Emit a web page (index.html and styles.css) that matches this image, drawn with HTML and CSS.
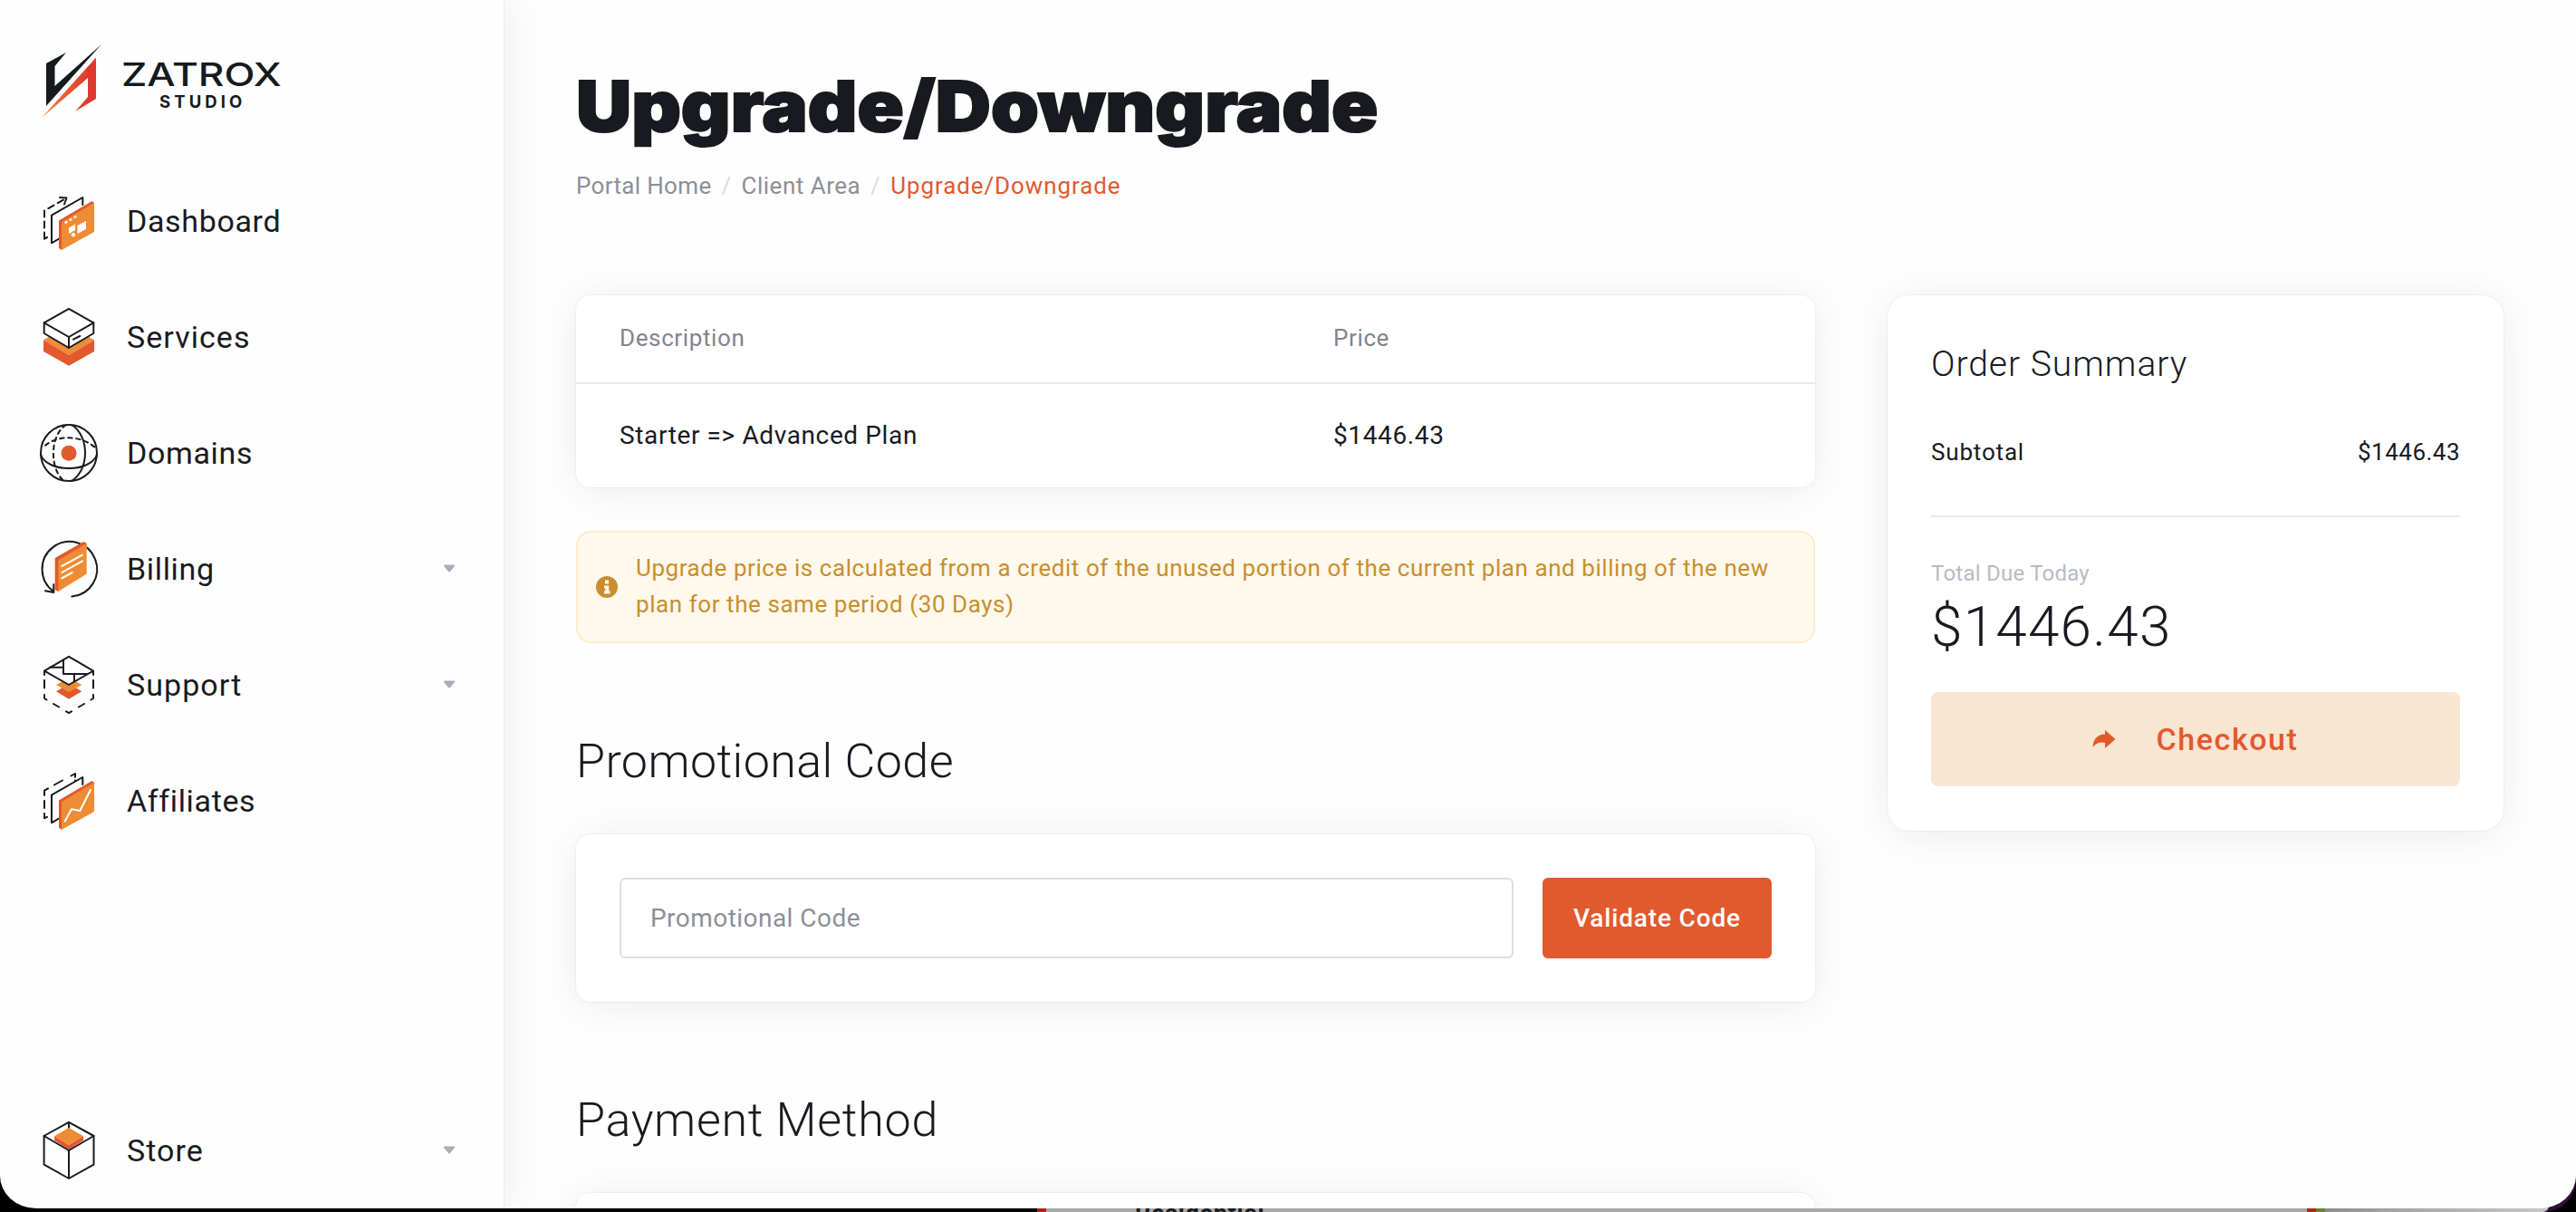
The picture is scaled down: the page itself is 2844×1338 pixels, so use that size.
FILE: index.html
```
<!DOCTYPE html>
<html lang="en">
<head>
<meta charset="utf-8">
<title>Upgrade/Downgrade</title>
<link rel="stylesheet" href="styles.css">
</head>
<body>
<div class="backdrop">
  <span class="chip chip-red"></span>
  <div class="pane"><span class="pane-title">Residential</span></div>
  <span class="chip chip-red"></span><span class="chip chip-green"></span>
  <div class="pane-end"></div>
</div>
<div class="window">
  <aside class="sidebar">
    <a class="logo">
      <svg class="logo-mark" width="66" height="82" viewBox="0 0 66 82">
        <defs><linearGradient id="flame" x1="0" y1="0" x2="1" y2="0"><stop offset="0.1" stop-color="#ec7c33"/><stop offset="0.85" stop-color="#dc3a31"/></linearGradient></defs>
        <path fill="#161a1d" d="M5 21 27 9 14.500 24V46L66 0 5 68z"/>
        <path fill="url(#flame)" d="M60 14.500V60L37 74 51 58V37L0 81z"/>
      </svg>
      <span class="logo-text"><b class="logo-name">ZATROX</b><b class="logo-sub">STUDIO</b></span>
    </a>
    <nav class="nav">
      <a class="nav-item">
        <svg class="icon" viewBox="0 0 64 64">
          <path class="line dash" d="M5 51.500V20.500L27 8"/><path class="line" d="M5 51.500l3-1.500M22 6l7.500.5L27 13.500"/>
          <path class="line" d="M22 51 13 56.300V25.700L47.300 6v8"/>
          <path class="dark" d="M21 31.500 57.500 10l2.500 2v5L24.500 64 21 62z"/>
          <path class="orange" d="M24 33 60 12v32L24 64z"/>
          <path class="white" d="M32 39.500l7-4V42l-7 4zM41.500 37 51 31.800v9L41.500 46.300z"/><circle class="white" cx="37" cy="47.300" r="2.200"/>
          <path class="dots" d="M28.500 33.600l1-.5M33.500 30.700l1-.5M38.500 27.700l1-.5"/>
        </svg><span>Dashboard</span></a>
      <a class="nav-item wide">
        <svg class="icon" viewBox="0 0 64 64">
          <path class="orange" d="M4 35.300 32 20l28 15.300L32 52z"/><path class="dark" d="M4 35.300 32 52l28-16.700V48L32 63.700 4 48z"/>
          <path class="line fillw" d="M32 .8 59.300 16.300V28L32 44 4.700 28V16.300z"/><path class="line" d="M4.700 16.300 32 32l27.300-15.700M32 32v12M37 34.700l7.300-3.700"/>
        </svg><span>Services</span></a>
      <a class="nav-item">
        <svg class="icon" viewBox="0 0 64 64">
          <circle class="line" cx="32" cy="32" r="31"/>
          <path class="line" d="M35 1C55 13 55 51 35 63M1 34C8 54 56 54 63 34"/>
          <path class="line dash2" d="M29 1C11 12 11 48 25 61.500M6 23.700C20 12 46 12 62 27"/>
          <circle class="dark" cx="32" cy="32.300" r="8.500"/>
        </svg><span>Domains</span></a>
      <a class="nav-item">
        <svg class="icon" viewBox="0 0 64 64">
          <path class="line" d="M15.300 57A30.300 30.300 0 1 1 35.300 62.500M6 56.300l9.300 1.700v-8.700"/>
          <path class="dark" d="M16.700 20 48.300 2l3.400 1.700v5L20.300 57l-3.600-2z"/><path class="orange" d="M20.300 22.500 51.700 4v33.500L20.300 57z"/>
          <path class="wline" d="M24.300 29 47 16.700M24.300 36 47 23.300M24.300 42.300l11.400-6.300"/>
        </svg><span>Billing</span><svg class="caret" viewBox="0 0 14 10"><path d="M2 1.500h10l-5 6z"/></svg></a>
      <a class="nav-item wide">
        <svg class="icon" viewBox="0 0 64 64">
          <path class="dark" d="M18 39.300 32 31l14.300 8.300L32 47.700z"/><path class="orange" d="M18 32l14-8 14.300 8L32 40z"/>
          <path class="line fillw" d="M32 .8 59 16.700 32 32 5 16.700z"/><path class="line" d="M26 4.700V20h26M11 12.700h15M38 20v8"/>
          <path class="line" d="M5 17v4M5 27v8.500M5 43v4l2.500 1.500M15 53l6 3.500M29 61.300l3 1.800 3-1.800M43 56.500l6-3.500M56.500 48.500 59 47v-4M59 35.500V27M59 21v-4"/>
        </svg><span>Support</span><svg class="caret" viewBox="0 0 14 10"><path d="M2 1.500h10l-5 6z"/></svg></a>
      <a class="nav-item">
        <svg class="icon" viewBox="0 0 64 64">
          <path class="line" d="M5 26v-5.300L9 18.500M16 14.500l9-5M34.500 4.500 39 2v4M5 32v8M5 46v5.300l3-1.500M39 9.500v.5"/>
          <path class="line" d="M22 51 13 56.300V25.700L47.300 6v8"/>
          <path class="dark" d="M21 31.500 57.500 10l2.500 2v5L24.500 64 21 62z"/><path class="orange" d="M24 33 60 12v32L24 64z"/>
          <path class="wline" d="M27.700 54.500 35 41.300l9.300 1.700L56 20"/>
        </svg><span>Affiliates</span></a>
      <a class="nav-item nav-last wide">
        <svg class="icon" viewBox="0 0 64 64">
          <path class="line" d="M32 .8 59.500 16v31.700L32 63 4.600 47.700V16zM32 32v31M32 1v7"/>
          <path class="dark" d="M16 16.300 32 26l16-9.700V21L32 31 16 21z"/><path class="orange" d="M32 7l16 9.300L32 26 16 16.300z"/>
          <path class="line" d="M4.600 16 32 32l27.500-16"/>
        </svg><span>Store</span><svg class="caret" viewBox="0 0 14 10"><path d="M2 1.500h10l-5 6z"/></svg></a>
    </nav>
  </aside>
  <main class="main">
    <h1><span class="title">Upgrade/Downgrade</span></h1>
    <div class="crumbs"><span class="crumb-home">Portal Home</span><i>/</i><span>Client Area</span><i>/</i><span class="current">Upgrade/Downgrade</span></div>
    <div class="columns">
      <div class="content">
        <section class="card">
          <div class="row head"><span>Description</span><span>Price</span></div>
          <div class="row"><span>Starter =&gt; Advanced Plan</span><span>$1446.43</span></div>
        </section>
        <div class="alert">
          <svg class="info" viewBox="0 0 24 24"><circle cx="12" cy="12" r="12" fill="#c98f2e"/><path fill="#fff8ec" d="M10 4.500h4v4h-4zM9 10.500h5.200v6H15.500V19.500H9v-3h1.300v-3H9z"/></svg>
          <p>Upgrade price is calculated from a credit of the unused portion of the current plan and billing of the new<br>plan for the same period (30 Days)</p>
        </div>
        <h2>Promotional Code</h2>
        <section class="card promo">
          <div class="input">Promotional Code</div>
          <div class="validate">Validate Code</div>
        </section>
        <h2 class="h2-pay">Payment Method</h2>
        <section class="card pay"></section>
      </div>
      <section class="card summary">
        <h3>Order Summary</h3>
        <div class="sub"><span class="sub-label">Subtotal</span><span>$1446.43</span></div>
        <div class="due">Total Due Today</div>
        <div class="amount">$1446.43</div>
        <div class="checkout"><svg class="share" viewBox="0 0 26 22"><path d="M14 1v4.500C6 6 1 10 .5 20.500 4 15 8 14.500 14 15v6L25.500 11z"/></svg><span>Checkout</span></div>
      </section>
    </div>
  </main>
</div>
</body>
</html>
```
FILE: styles.css
```
* { box-sizing: border-box; }
body {
  margin: 0;
  width: 2844px;
  height: 1338px;
  overflow: hidden;
  position: relative;
  background: #060608;
  color: #191a1f;
  font-family: Roboto, "Liberation Sans", sans-serif;
}
h1, h2, h3, p { margin: 0; font-weight: 300; }

/* desktop visible behind the window */
.backdrop {
  position: absolute;
  inset: auto 0 0 0;
  height: 72px;
  padding-left: 1145px;
  display: flex;
  background: #000;
}
.chip { width: 10px; height: 72px; }
.chip-red { background: #a62a1a; }
.chip-green { background: #6a852f; }
.pane { width: 1392px; height: 72px; background: #a8a8a8; }
.pane-title { display: block; margin: 58px 0 0 98px; font: 700 27px/32px Roboto, sans-serif; letter-spacing: .7px; color: #1b1b1f; }
.pane-end { flex: 1; border-right: 24px solid #2d1233; border-bottom-right-radius: 36px; background: linear-gradient(90deg, #8d8d8d, #aaa 40%, #c8c8c8); }

.window {
  position: absolute;
  inset: 0 0 4px 0;
  display: flex;
  background: #fefefe;
  overflow: hidden;
  border-radius: 0 0 40px 40px / 0 0 36px 36px;
}

.sidebar {
  width: 557px;
  flex: none;
  display: flex;
  flex-direction: column;
  padding: 49px 53px 0 44px;
  border-right: 1px solid #ececec;
  box-shadow: 0 0 48px rgba(0, 0, 0, .08);
}
.logo { display: flex; padding-left: 2px; height: 131px; }
.logo-text { display: flex; flex-direction: column; padding: 14px 0 0 22px; font-family: Inter, sans-serif; color: #161a1d; }
.logo-name { font-size: 36px; line-height: 38px; font-weight: 500; align-self: flex-start; transform: scaleX(1.230); transform-origin: 0 50%; }
.logo-sub { font-size: 18.500px; line-height: 22px; font-weight: 700; letter-spacing: 4.100px; padding-left: 42px; align-self: flex-start; }

.nav { flex: 1; display: flex; flex-direction: column; }
.nav-item { height: 128px; display: flex; align-items: center; font-size: 34px; letter-spacing: .65px; }
.nav-item span { margin-top: -1px; }
.wide { letter-spacing: 1.050px; }
.nav-last { margin-top: auto; }
.icon { width: 64px; height: 64px; margin-right: 32px; overflow: visible; }
.caret { width: 14px; height: 10px; margin-left: auto; fill: #abadb8; stroke: #abadb8; stroke-width: 2; stroke-linejoin: round; }

.line { fill: none; stroke: #191a1f; stroke-width: 2; stroke-linejoin: round; stroke-linecap: round; }
.fillw { fill: #fff; }
.dash { stroke-dasharray: 7 5; }
.dash2 { stroke-dasharray: 4.500 4.500; }
.wline { fill: none; stroke: #fff; stroke-width: 2; stroke-linejoin: round; stroke-linecap: round; }
.dots { stroke: #fff; stroke-width: 2.400; stroke-linecap: round; }
.orange { fill: #ee8c35; }
.dark { fill: #e2592e; }
.white { fill: #fff; }

.main { flex: 1; padding: 69px 80px 0 79px; }
h1 { font: 900 77px/96px Inter, sans-serif; }
.title { display: inline-block; transform: scaleX(1.100); transform-origin: 0 50%; -webkit-text-stroke: 2px #191a1f; }
.crumbs { margin-top: 20px; height: 40px; display: flex; align-items: center; font-size: 26px; letter-spacing: .5px; color: #8d8f98; }
.crumbs i { width: 33px; text-align: center; color: #dcdcde; font-style: normal; }
.crumb-home { letter-spacing: .33px; }
.crumbs .current { color: #e2592e; letter-spacing: .9px; }

.columns { margin-top: 101px; display: flex; gap: 80px; align-items: flex-start; }
.content { width: 1368px; }
.card { background: #fff; border-radius: 16px; box-shadow: 0 0 0 1px rgba(0, 0, 0, .035), 0 4px 44px rgba(0, 0, 0, .075); }
.row { display: grid; grid-template-columns: 788px 1fr; padding: 0 48px 2px; align-items: center; height: 114px; font-size: 28px; letter-spacing: .62px; }
.head { height: 98px; font-size: 26px; color: #82848d; border-bottom: 2px solid #e8e8ea; }

.alert { margin-top: 48px; height: 124px; display: flex; align-items: center; padding-left: 20px; gap: 20px; border: 2px solid #fcedca; border-radius: 16px; background: #fff8ec; color: #c98f2e; font-size: 26px; line-height: 40px; letter-spacing: .565px; }
.alert p { font-weight: 400; white-space: nowrap; margin-top: -3px; }
.info { width: 24px; height: 24px; flex: none; }

h2 { margin-top: 98px; margin-bottom: 48px; font-size: 52px; line-height: 65px; letter-spacing: .4px; }
.h2-pay { letter-spacing: .7px; }
.promo { height: 185px; padding: 48px; display: flex; gap: 32px; }
.input { flex: 1; height: 89px; padding-left: 32px; border: 2px solid #dddee2; border-radius: 6px; display: flex; align-items: center; font-size: 28px; letter-spacing: .46px; color: #8d8f98; }
.validate { width: 253px; height: 89px; display: flex; align-items: center; justify-content: center; background: #e2592e; border-radius: 6px; color: #fff; font-size: 28px; font-weight: 500; letter-spacing: .84px; }
.pay { height: 200px; }

.summary { width: 680px; height: 591px; padding: 48px; border-radius: 24px; }
h3 { font-size: 39px; line-height: 56px; letter-spacing: 1px; }
.sub { display: flex; justify-content: space-between; margin-top: 49px; height: 92px; line-height: 40px; font-size: 26px; letter-spacing: .48px; border-bottom: 2px solid #e8e8ea; }
.sub-label { letter-spacing: .82px; }
.due { margin-top: 44px; font-size: 24px; line-height: 36px; letter-spacing: .24px; color: #b9bbc5; }
.amount { margin-top: 1px; font-size: 62px; font-weight: 300; line-height: 80px; letter-spacing: 1.250px; }
.checkout { margin-top: 32px; height: 104px; display: flex; align-items: center; justify-content: center; gap: 44px; border-radius: 8px; background: #f8e5d2; color: #e2592e; font-size: 34px; font-weight: 500; letter-spacing: 1.600px; }
.share { width: 26px; height: 22px; fill: #e2592e; }
```
